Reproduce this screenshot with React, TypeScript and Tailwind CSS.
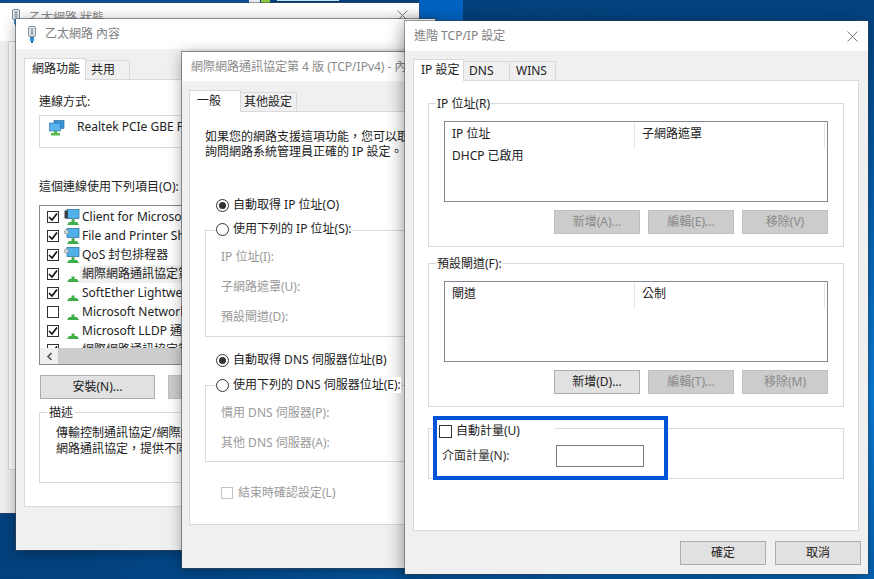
import React from 'react';

type IconKind = 'client' | 'service' | 'proto';

function Plug() {
  return (
    <svg width="10" height="17" viewBox="0 0 10 17" className="shrink-0">
      <rect x="1.5" y="0.5" width="7" height="10" rx="1.5" fill="#e8eef2" stroke="#7d8c96" />
      <rect x="3.5" y="2" width="3" height="7" fill="#9fb0bb" />
      <rect x="3" y="11" width="4" height="4" fill="#2f8fd0" />
      <rect x="4" y="15" width="2" height="2" fill="#1f6fb0" />
    </svg>
  );
}

function Close({ color = '#7a7a7a' }: { color?: string }) {
  return (
    <svg width="11" height="11" viewBox="0 0 11 11" className="shrink-0">
      <path d="M0.5 0.5 L10.5 10.5 M10.5 0.5 L0.5 10.5" stroke={color} strokeWidth="1" fill="none" />
    </svg>
  );
}

function AdapterIcon() {
  return (
    <svg width="16" height="16" viewBox="0 0 16 16" className="shrink-0">
      <rect x="5" y="0.5" width="10" height="8" fill="#3d94d6" stroke="#1d5f94" strokeWidth="0.6" />
      <rect x="0.5" y="3" width="11" height="8" fill="#5bb4ec" stroke="#1d6aa5" strokeWidth="0.6" />
      <rect x="5" y="11" width="3" height="2" fill="#4cae4c" />
      <rect x="2" y="13" width="9" height="2.5" fill="#56b948" />
    </svg>
  );
}

function RowIcon({ kind }: { kind: IconKind }) {
  return (
    <svg width="16" height="16" viewBox="0 0 16 16" className="shrink-0">
      {kind !== 'proto' && (
        <>
          <rect x="3" y="0.5" width="12" height="9" fill="#4fb0ea" stroke="#1f6c9e" strokeWidth="0.7" />
          <rect x="8" y="9.5" width="2.5" height="2" fill="#8d9aa3" />
          {kind === 'client' ? (
            <rect x="0.5" y="1.5" width="3.5" height="8" fill="#3a3f45" />
          ) : (
            <circle cx="2.5" cy="4" r="2.2" fill="#c9d3da" stroke="#7b8a94" strokeWidth="0.6" />
          )}
        </>
      )}
      <rect x="7.5" y="10.5" width="3" height="3" fill="#3fae49" />
      <path d="M3 16 L5 13 H13 L15 16 Z" fill="#3fae49" />
    </svg>
  );
}

function Check({ checked, disabled, big }: { checked?: boolean; disabled?: boolean; big?: boolean }) {
  return (
    <span
      className={`shrink-0 flex items-center justify-center border bg-white ${big ? 'w-[13px] h-[13px]' : 'w-[12px] h-[12px]'} ${
        disabled ? 'border-[#c4c4c4]' : 'border-[#333333]'
      }`}
    >
      {checked && (
        <svg width="10" height="10" viewBox="0 0 10 10">
          <path d="M1 5 L4 8 L9 1.5" stroke="#111111" strokeWidth="1.7" fill="none" />
        </svg>
      )}
    </span>
  );
}

function Radio({ on }: { on?: boolean }) {
  return (
    <span className="w-[13px] h-[13px] shrink-0 rounded-full border border-[#333333] bg-white flex items-center justify-center">
      {on && <span className="w-[7px] h-[7px] rounded-full bg-[#333333]" />}
    </span>
  );
}

function Btn({ label, off, wide }: { label: string; off?: boolean; wide?: boolean }) {
  return (
    <div
      className={`h-[24px] shrink-0 border flex items-center justify-center ${wide ? 'w-[115px]' : 'w-[86px]'} ${
        off ? 'bg-[#cccccc] border-[#bfbfbf] text-[#8a8a8a]' : 'bg-[#e1e1e1] border-[#adadad] text-[#222222]'
      }`}
    >
      {label}
    </div>
  );
}

function Tabs({ active, rest }: { active: [string, string]; rest: [string, string][] }) {
  return (
    <div className="flex items-end h-[22px] relative z-10 -mb-px">
      <div className={`h-[22px] bg-white border border-b-0 border-[#d9d9d9] pl-[7px] pt-[2px] ${active[1]}`}>{active[0]}</div>
      {rest.map(([label, width]) => (
        <div key={label} className={`h-[20px] bg-[#f0f0f0] border border-l-0 border-[#d9d9d9] flex items-center ${width}`}>
          {label}
        </div>
      ))}
    </div>
  );
}

function RoutesList({ left, right, note }: { left: string; right: string; note?: string }) {
  return (
    <div className="mx-[15px] mt-[17px] h-[81px] border border-[#828790] bg-white flex flex-col">
      <div className="flex h-[26px] shrink-0 mr-[2px]">
        <div className="w-[190px] pl-[7px] pt-[4px] border-r border-[#e5e5e5]">{left}</div>
        <div className="flex-1 pl-[7px] pt-[4px] border-r border-[#e5e5e5]">{right}</div>
      </div>
      {note && <div className="pl-[7px]">{note}</div>}
    </div>
  );
}

const rows: { label: string; kind: IconKind; checked: boolean; hl?: boolean }[] = [
  { label: 'Client for Microsoft', kind: 'client', checked: true },
  { label: 'File and Printer Sharing', kind: 'service', checked: true },
  { label: 'QoS 封包排程器', kind: 'service', checked: true },
  { label: '網際網路通訊協定第', kind: 'proto', checked: true, hl: true },
  { label: 'SoftEther Lightweight', kind: 'proto', checked: true },
  { label: 'Microsoft Network', kind: 'proto', checked: false },
  { label: 'Microsoft LLDP 通訊', kind: 'proto', checked: true },
  { label: '網際網路通訊協定第', kind: 'proto', checked: true },
];

export default function App() {
  return (
    <div className="relative w-[874px] h-[579px] overflow-hidden bg-[radial-gradient(ellipse_at_100%_68%,#0a7fdc_0%,#0663b4_32%,#03427f_70%,#063a70_100%)] font-['Noto_Sans','Noto_Sans_CJK_TC',sans-serif] text-[12px] leading-[16px] text-[#222222]">
      {/* desktop behind the windows */}
      <div className="absolute left-[419px] top-0 w-[44px] h-[24px] bg-[#0063c2]" />
      <div className="absolute left-0 top-0 w-[250px] h-[4px] bg-[#0a4f96]" />
      <div className="absolute left-[249px] top-0 w-[11px] h-[4px] bg-[#e4e8ee]" />
      <div className="absolute left-[261px] top-0 w-[9px] h-[4px] bg-[#8cc63f]" />
      <div className="absolute left-[277px] top-0 w-[62px] h-[1px] bg-[#c8dcf0]" />

      {/* status window */}
      <div className="absolute left-[-10px] top-[3px] w-[429px] h-[510px] bg-[#f0f0f0] shadow-[0_0_0_1px_rgba(60,70,80,0.5)] flex flex-col">
        <div className="h-[38px] shrink-0 bg-white flex items-start justify-between pl-[21px] pr-[11px] pt-[6px] text-[#8a8a8a]">
          <div className="flex items-center gap-[8px]">
            <Plug />
            <span>乙太網路 狀態</span>
          </div>
          <div className="mt-[1px]">
            <Close />
          </div>
        </div>
        <div className="ml-[18px] h-[429px] border border-[#d9d9d9] bg-white" />
      </div>

      {/* properties window */}
      <div className="absolute left-[16px] top-[19px] w-[419px] h-[531px] bg-[#f0f0f0] shadow-[0_0_0_1px_rgba(60,70,80,0.55),0_2px_14px_rgba(0,0,0,0.35)] flex flex-col">
        <div className="h-[30px] shrink-0 bg-white flex items-center gap-[8px] pl-[11px] text-[#7f7f7f]">
          <Plug />
          <span>乙太網路 內容</span>
        </div>
        <div className="pl-[8px] pt-[9px] pr-[8px]">
          <Tabs active={['網路功能', 'w-[62px]']} rest={[['共用', 'w-[44px] pl-[5px]']]} />
          <div className="h-[428px] border border-[#d9d9d9] bg-white pl-[14px] pt-[14px]">
            <div>連線方式:</div>
            <div className="mt-[5px] h-[33px] border border-[#d9d9d9] flex items-start gap-[12px] pl-[9px] pt-[4px]">
              <AdapterIcon />
              <span className="mt-[-1px] whitespace-nowrap">Realtek PCIe GBE Family</span>
            </div>
            <div className="mt-[31px]">這個連線使用下列項目(O):</div>
            <div className="mt-[10px] h-[160px] border border-[#828790] flex flex-col overflow-hidden">
              <div className="flex-1 overflow-hidden pt-[1px]">
                {rows.map((r, i) => (
                  <div key={i} className="h-[19px] flex items-center pl-[7px] whitespace-nowrap">
                    <Check checked={r.checked} />
                    <span className="ml-[5px]">
                      <RowIcon kind={r.kind} />
                    </span>
                    <span className={`pl-[2px] h-[18px] flex items-center ${r.hl ? 'bg-[#f0f0f0] pr-[100px]' : ''}`}>{r.label}</span>
                  </div>
                ))}
              </div>
              <div className="h-[16px] shrink-0 flex bg-[#f0f0f0]">
                <div className="w-[18px] flex items-center justify-center">
                  <svg width="7" height="9" viewBox="0 0 7 9">
                    <path d="M5.5 1 L2 4.5 L5.5 8" stroke="#505050" strokeWidth="1.6" fill="none" />
                  </svg>
                </div>
                <div className="flex-1 bg-[#cdcdcd]" />
              </div>
            </div>
            <div className="mt-[10px] flex gap-[13px] pl-[1px]">
              <Btn label="安裝(N)..." wide />
              <div className="h-[24px] w-[115px] shrink-0 border bg-[#cccccc] border-[#bfbfbf]" />
            </div>
            <div className="relative mt-[13px] h-[71px] border border-[#d9d9d9] pl-[16px] pt-[12px]">
              <div className="absolute left-[7px] top-[-8px] bg-white px-[2px]">描述</div>
              <div className="whitespace-nowrap">傳輸控制通訊協定/網際網</div>
              <div className="whitespace-nowrap">網路通訊協定，提供不同網</div>
            </div>
          </div>
        </div>
      </div>

      {/* ipv4 window */}
      <div className="absolute left-[182px] top-[52px] w-[240px] h-[516px] bg-[#f0f0f0] shadow-[0_0_0_1px_rgba(60,70,80,0.55),0_2px_14px_rgba(0,0,0,0.35)] flex flex-col overflow-hidden">
        <div className="h-[29px] shrink-0 bg-white flex items-center pl-[9px] text-[#8a8a8a] whitespace-nowrap">
          網際網路通訊協定第 4 版 (TCP/IPv4) - 內容
        </div>
        <div className="pl-[7px] pt-[9px] w-[300px]">
          <Tabs active={['一般', 'w-[52px]']} rest={[['其他設定', 'w-[56px] pl-[3px]']]} />
          <div className="h-[414px] border border-[#d9d9d9] bg-white pl-[15px] pt-[17px]">
            <div className="leading-[15px] whitespace-nowrap">如果您的網路支援這項功能，您可以取</div>
            <div className="leading-[15px] whitespace-nowrap">詢問網路系統管理員正確的 IP 設定。</div>
            <div className="mt-[38px] ml-[11px] flex items-center gap-[4px] h-[16px]">
              <Radio on />
              <span>自動取得 IP 位址(O)</span>
            </div>
            <div className="mt-[8px] ml-[11px] flex items-center gap-[4px] h-[16px] relative z-10 w-fit bg-white">
              <Radio />
              <span>使用下列的 IP 位址(S):</span>
            </div>
            <div className="mt-[-7px] h-[107px] border border-[#d9d9d9] pl-[15px] pt-[18px] flex flex-col gap-[14px] text-[#9a9a9a]">
              <div>IP 位址(I):</div>
              <div>子網路遮罩(U):</div>
              <div>預設閘道(D):</div>
            </div>
            <div className="mt-[15px] ml-[11px] flex items-center gap-[4px] h-[16px]">
              <Radio on />
              <span>自動取得 DNS 伺服器位址(B)</span>
            </div>
            <div className="mt-[9px] ml-[11px] flex items-center gap-[4px] h-[16px] relative z-10 w-fit bg-white">
              <Radio />
              <span>使用下列的 DNS 伺服器位址(E):</span>
            </div>
            <div className="mt-[-8px] h-[77px] border border-[#d9d9d9] pl-[15px] pt-[19px] flex flex-col gap-[14px] text-[#9a9a9a]">
              <div>慣用 DNS 伺服器(P):</div>
              <div>其他 DNS 伺服器(A):</div>
            </div>
            <div className="mt-[23px] ml-[16px] flex items-center gap-[5px] h-[16px] text-[#9a9a9a]">
              <Check disabled />
              <span>結束時確認設定(L)</span>
            </div>
          </div>
        </div>
      </div>

      {/* advanced window */}
      <div className="absolute left-[405px] top-[21px] w-[463px] h-[553px] bg-[#f0f0f0] shadow-[0_0_0_1px_rgba(60,70,80,0.45),-2px_2px_16px_rgba(0,0,0,0.4)] flex flex-col">
        <div className="h-[30px] shrink-0 bg-white flex items-center justify-between pl-[9px] pr-[10px] text-[#7f7f7f]">
          <span>進階 TCP/IP 設定</span>
          <Close />
        </div>
        <div className="pl-[8px] pr-[9px] pt-[8px]">
          <Tabs active={['IP 設定', 'w-[51px]']} rest={[['DNS', 'w-[46px] pl-[5px]'], ['WINS', 'w-[46px] pl-[6px]']]} />
          <div className="h-[451px] border border-[#d9d9d9] bg-white px-[14px] pt-[22px]">
            <div className="relative h-[144px] border border-[#d9d9d9]">
              <div className="absolute left-[7px] top-[-8px] bg-white px-[1px]">IP 位址(R)</div>
              <RoutesList left="IP 位址" right="子網路遮罩" note="DHCP 已啟用" />
              <div className="mt-[8px] mr-[15px] flex justify-end gap-[8px]">
                <Btn label="新增(A)..." off />
                <Btn label="編輯(E)..." off />
                <Btn label="移除(V)" off />
              </div>
            </div>
            <div className="relative mt-[16px] h-[144px] border border-[#d9d9d9]">
              <div className="absolute left-[7px] top-[-8px] bg-white px-[1px]">預設閘道(F):</div>
              <RoutesList left="閘道" right="公制" />
              <div className="mt-[8px] mr-[15px] flex justify-end gap-[8px]">
                <Btn label="新增(D)..." />
                <Btn label="編輯(T)..." off />
                <Btn label="移除(M)" off />
              </div>
            </div>
            <div className="relative mt-[21px] h-[51px] border border-[#d9d9d9] pl-[13px] pt-[16px]">
              <div className="absolute left-[10px] top-[-6px] w-[116px] h-[16px] bg-white flex items-center gap-[4px]">
                <Check big />
                <span>自動計量(U)</span>
              </div>
              <div className="flex items-center h-[22px]">
                <span className="w-[114px] text-[#333333]">介面計量(N):</span>
                <div className="w-[88px] h-[22px] border border-[#7a7a7a] bg-white" />
              </div>
            </div>
          </div>
        </div>
        <div className="mt-[10px] pr-[7px] flex justify-end gap-[9px]">
          <Btn label="確定" />
          <Btn label="取消" />
        </div>
        {/* annotation drawn over the dialog */}
        <div className="absolute left-[28px] top-[395px] w-[235px] h-[64px] border-[4px] border-[#0052d9]" />
      </div>
    </div>
  );
}
